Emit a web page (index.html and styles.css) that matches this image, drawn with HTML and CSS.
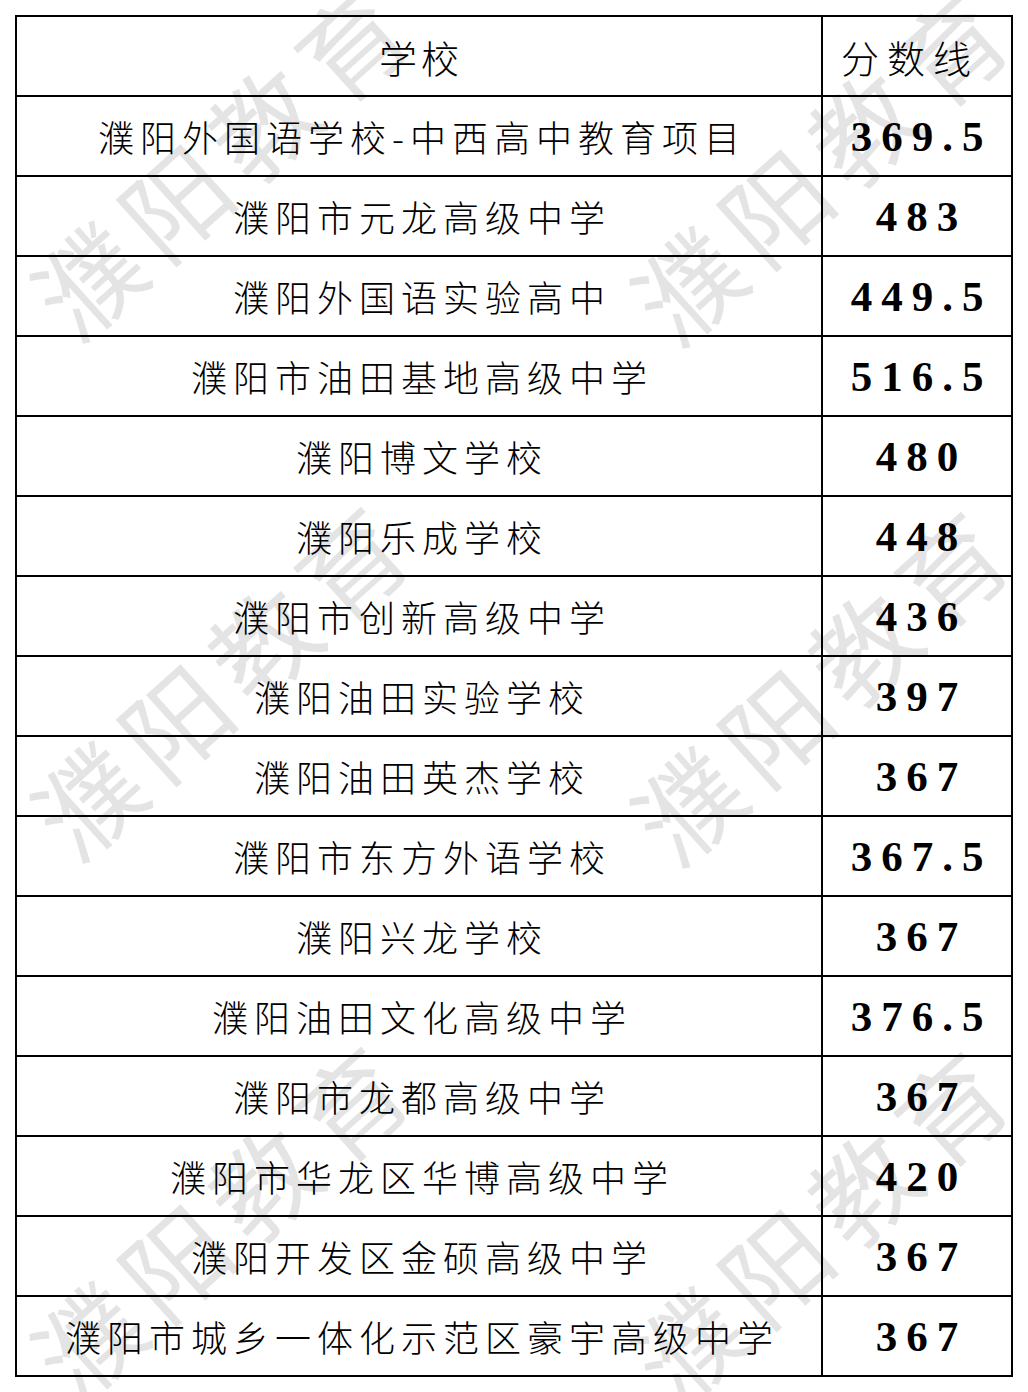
FILE: index.html
```html
<!DOCTYPE html>
<html lang="zh-CN">
<head>
<meta charset="utf-8">
<title>濮阳 分数线</title>
<link rel="stylesheet" href="styles.css">
</head>
<body>
<div class="page">
  <div class="watermarks" aria-hidden="true">
    <span class="wm wm-a">濮阳教育</span>
    <span class="wm wm-b">濮阳教育</span>
    <span class="wm wm-c">濮阳教育</span>
    <span class="wm wm-d">濮阳教育</span>
    <span class="wm wm-e">濮阳教育</span>
    <span class="wm wm-f">濮阳教育</span>
  </div>
  <div class="table">
    <div class="cell head name-head">学校</div><div class="cell head score-head">分数线</div>
    <div class="cell name">濮阳外国语学校-中西高中教育项目</div><div class="cell score">369.5</div>
    <div class="cell name">濮阳市元龙高级中学</div><div class="cell score">483</div>
    <div class="cell name">濮阳外国语实验高中</div><div class="cell score">449.5</div>
    <div class="cell name">濮阳市油田基地高级中学</div><div class="cell score">516.5</div>
    <div class="cell name">濮阳博文学校</div><div class="cell score">480</div>
    <div class="cell name">濮阳乐成学校</div><div class="cell score">448</div>
    <div class="cell name">濮阳市创新高级中学</div><div class="cell score">436</div>
    <div class="cell name">濮阳油田实验学校</div><div class="cell score">397</div>
    <div class="cell name">濮阳油田英杰学校</div><div class="cell score">367</div>
    <div class="cell name">濮阳市东方外语学校</div><div class="cell score">367.5</div>
    <div class="cell name">濮阳兴龙学校</div><div class="cell score">367</div>
    <div class="cell name">濮阳油田文化高级中学</div><div class="cell score">376.5</div>
    <div class="cell name">濮阳市龙都高级中学</div><div class="cell score">367</div>
    <div class="cell name">濮阳市华龙区华博高级中学</div><div class="cell score">420</div>
    <div class="cell name">濮阳开发区金硕高级中学</div><div class="cell score">367</div>
    <div class="cell name">濮阳市城乡一体化示范区豪宇高级中学</div><div class="cell score">367</div>
  </div>
</div>
</body>
</html>
```

FILE: styles.css
```css
html, body {
  margin: 0;
  padding: 0;
  background: #ffffff;
}

.page {
  position: relative;
  width: 1028px;
  height: 1392px;
  overflow: hidden;
}

.table {
  position: relative;
  z-index: 1;
  display: grid;
  grid-template-columns: 806px 190px;
  width: 998px;
  margin: 15px 0 0 15px;
  border-top: 2px solid #000;
  border-left: 2px solid #000;
  box-sizing: border-box;
  color: #000;
}

.cell {
  box-sizing: border-box;
  height: 80px;
  border-right: 2px solid #000;
  border-bottom: 2px solid #000;
  display: flex;
  align-items: center;
  justify-content: center;
  white-space: nowrap;
}

.name {
  font-family: "Noto Sans CJK SC", sans-serif;
  font-weight: 300;
  font-size: 36px;
  letter-spacing: 6px;
  padding-left: 6px;
}

.score {
  font-family: "Liberation Serif", serif;
  font-weight: bold;
  font-size: 43px;
  letter-spacing: 9px;
  padding-left: 9px;
}

.head {
  font-family: "Noto Sans CJK SC", sans-serif;
  font-weight: 300;
  font-size: 38px;
}

.name-head {
  letter-spacing: 4px;
  padding-left: 4px;
}

.score-head {
  letter-spacing: 8px;
  padding-left: 0;
  padding-right: 14px;
}

.watermarks {
  position: absolute;
  inset: 0;
  z-index: 0;
}

.wm {
  position: absolute;
  font-family: "Noto Sans CJK SC", sans-serif;
  font-size: 104px;
  line-height: 1;
  letter-spacing: 14px;
  color: #e4e4e4;
  white-space: nowrap;
  transform: translate(-50%, -50%) rotate(-42deg);
}

.wm-a { left: 222px; top: 155px; }
.wm-b { left: 822px; top: 160px; }
.wm-c { left: 222px; top: 675px; }
.wm-d { left: 822px; top: 680px; }
.wm-e { left: 222px; top: 1215px; }
.wm-f { left: 822px; top: 1220px; }
```
